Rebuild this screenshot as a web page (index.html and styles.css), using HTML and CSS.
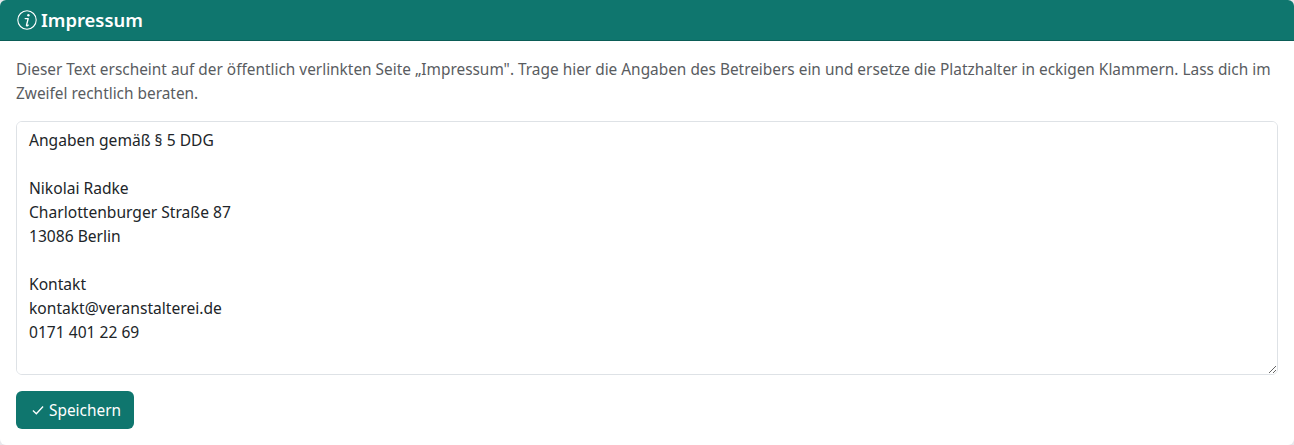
FILE: index.html
```html
<!DOCTYPE html>
<html lang="de">
<head>
<meta charset="UTF-8">
<meta name="viewport" content="width=device-width, initial-scale=1.0">
<title>Impressum</title>
<link rel="stylesheet" href="styles.css">
</head>
<body>
<div class="card">
    <div class="card-header">
        <svg class="info-icon" viewBox="0 0 20 20" width="20" height="20" aria-hidden="true">
            <circle cx="10" cy="10" r="9.2" fill="none" stroke="currentColor" stroke-width="1.1"/>
            <circle cx="11.4" cy="5.2" r="1.2" fill="currentColor"/>
            <path d="M8.2 8.6h3l-1.7 6.6c-.1.6.2.8.7.6l1-.6" fill="none" stroke="currentColor" stroke-width="1.4" stroke-linecap="round" stroke-linejoin="round"/>
        </svg>
        <h1>Impressum</h1>
    </div>
    <div class="card-body">
        <p class="hint">Dieser Text erscheint auf der öffentlich verlinkten Seite „Impressum". Trage hier die Angaben des Betreibers ein und ersetze die Platzhalter in eckigen Klammern. Lass dich im Zweifel rechtlich beraten.</p>
        <textarea class="editor" spellcheck="false">Angaben gemäß § 5 DDG

Nikolai Radke
Charlottenburger Straße 87
13086 Berlin

Kontakt
kontakt@veranstalterei.de
0171 401 22 69

Dieser Text ist auf der öffentlichen Seite sichtbar und bearbeitbar</textarea>
        <button class="save" type="button">
            <svg viewBox="0 0 16 16" width="14" height="14" aria-hidden="true">
                <path d="M2.2 8.6l3.9 3.7 7.7-8.3" fill="none" stroke="currentColor" stroke-width="1.5"/>
            </svg>
            Speichern
        </button>
    </div>
</div>
</body>
</html>
```

FILE: styles.css
```css
body, html {
    margin: 0;
    height: 100%;
    background-color: #e8e8ec;
    font-family: "Noto Sans", Lato, sans-serif;
    overflow: hidden;
}

.card {
    height: 445px;
    background-color: #fff;
    border-radius: 6px;
    overflow: hidden;
}

.card-header {
    display: flex;
    align-items: center;
    gap: 4px;
    box-sizing: border-box;
    height: 41px;
    padding: 0 16px 1px 17px;
    background-color: #0f766e;
    border-bottom: 1px solid #0b5d57;
    color: #fff;
}

.card-header h1 {
    margin: 0;
    font-size: 18.4px;
    font-weight: 600;
}

.card-body {
    padding: 17px 16px 0;
}

.hint {
    margin: 0 0 15px;
    font-size: 15.4px;
    line-height: 24px;
    color: #595c5f;
}

.editor {
    display: block;
    box-sizing: border-box;
    width: 1262px;
    height: 254px;
    padding: 6px 12px;
    border: 1px solid #dee2e6;
    border-radius: 6px;
    font-family: inherit;
    font-size: 15.6px;
    line-height: 24px;
    color: #212529;
    background: #fff;
    outline: none;
    scrollbar-width: none;
}

.save {
    display: flex;
    align-items: center;
    gap: 4px;
    margin-top: 16px;
    box-sizing: border-box;
    width: 118px;
    height: 38px;
    padding: 0 0 0 15px;
    border: none;
    border-radius: 6px;
    background-color: #0f766e;
    color: #fff;
    font-family: inherit;
    font-size: 15.4px;
    cursor: pointer;
}
```
